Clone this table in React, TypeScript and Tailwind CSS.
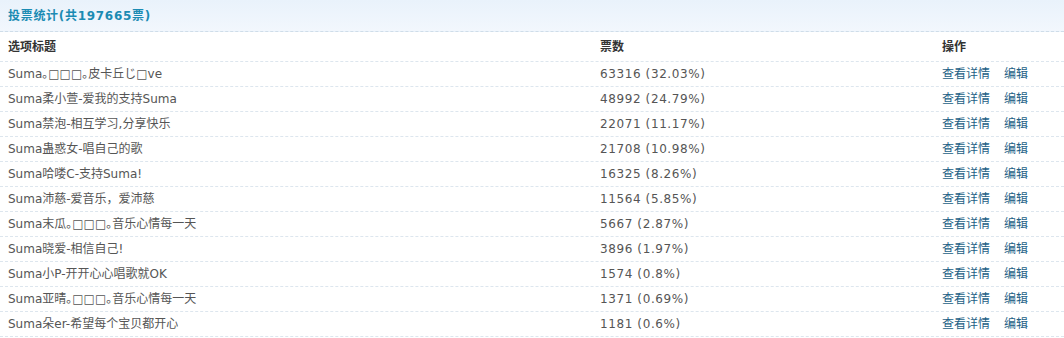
import React from "react";

type VoteRow = {
  title: string;
  votes: number;
  percent: string;
};

const rows: VoteRow[] = [
  { title: "Suma｡□□□｡皮卡丘じ□ve", votes: 63316, percent: "32.03%" },
  { title: "Suma柔小萱-爱我的支持Suma", votes: 48992, percent: "24.79%" },
  { title: "Suma禁泡-相互学习,分享快乐", votes: 22071, percent: "11.17%" },
  { title: "Suma蛊惑女-唱自己的歌", votes: 21708, percent: "10.98%" },
  { title: "Suma哈喽C-支持Suma!", votes: 16325, percent: "8.26%" },
  { title: "Suma沛慈-爱音乐，爱沛慈", votes: 11564, percent: "5.85%" },
  { title: "Suma末瓜｡□□□｡音乐心情每一天", votes: 5667, percent: "2.87%" },
  { title: "Suma晓爱-相信自己!", votes: 3896, percent: "1.97%" },
  { title: "Suma小P-开开心心唱歌就OK", votes: 1574, percent: "0.8%" },
  { title: "Suma亚晴｡□□□｡音乐心情每一天", votes: 1371, percent: "0.69%" },
  { title: "Suma朵er-希望每个宝贝都开心", votes: 1181, percent: "0.6%" },
];

const font = {
  fontFamily: '"DejaVu Sans", "Noto Sans CJK SC", sans-serif',
};

export default function App() {
  return (
    <div className="w-[1064px] h-[338px] bg-white overflow-hidden" style={font}>
      {/* ================= TITLE BAR ================= */}
      <div className="h-[32px] flex items-center px-[8px] bg-gradient-to-b from-[#e9f2fb] to-[#f2f7fd] border-b border-dashed border-[#cfdde9]">
        <h2 className="text-[12px] font-bold tracking-[0.7px] text-[#1b8bb3]">
          投票统计(共197665票)
        </h2>
      </div>

      {/* ================= TABLE ================= */}
      <div className="h-[30px] flex items-center px-[8px] border-b border-dashed border-[#dde6ee] text-[12px] font-bold text-[#333]">
        <div className="w-[592px]">选项标题</div>
        <div className="w-[342px]">票数</div>
        <div>操作</div>
      </div>

      {rows.map((row) => (
        <div
          key={row.title}
          className="h-[25px] flex items-center px-[8px] border-b border-dashed border-[#dde6ee] text-[12px] text-[#555]"
        >
          <div className="w-[592px]">{row.title}</div>
          <div className="w-[342px] tracking-[0.6px]">
            {row.votes} ({row.percent})
          </div>
          <div className="flex gap-[14px] text-[#235f86]">
            <a className="cursor-pointer">查看详情</a>
            <a className="cursor-pointer">编辑</a>
          </div>
        </div>
      ))}
    </div>
  );
}
